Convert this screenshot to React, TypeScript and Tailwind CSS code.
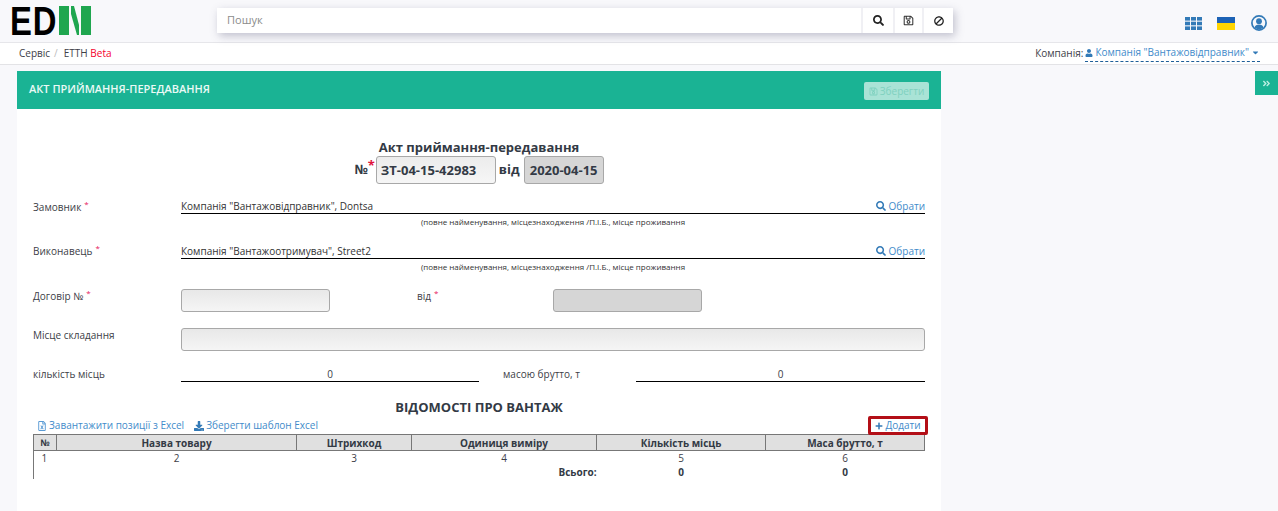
import { FaAngleDoubleRight, FaBan, FaCaretDown, FaDownload, FaPlus, FaRegFileExcel, FaRegSave, FaSearch, FaUser } from 'react-icons/fa';

const inputClass = 'h-[23px] border border-[#a8a8a8] rounded-[3px] bg-gradient-to-b from-[#e8e8e8] to-[#f5f5f5]';
const greyInputClass = 'h-[23px] border border-[#a8a8a8] rounded-[3px] bg-[#d6d6d6]';

function Star() {
  return <span className="text-[#e6175c] text-[8px] leading-none align-top ml-[3px]">*</span>;
}

function PartyRow({ label, value, top, labelTop }: { label: string; value: string; top: string; labelTop: string }) {
  return (
    <div className={top}>
      <div className="flex items-start">
        <div className={`w-[148px] leading-[14px] ${labelTop}`}>{label}<Star /></div>
        <div className="flex-1 border-b-[1.5px] border-black h-[18px] flex justify-between items-end leading-[14px] text-[#333]">
          <span>{value}</span>
          <a className="text-[#428bca] flex items-center gap-[3px]"><FaSearch className="text-[10px] text-[#337ab7]" />Обрати</a>
        </div>
      </div>
      <div className="ml-[148px] text-center text-[8px] leading-[10px] mt-[3px] text-[#333]">
        (повне найменування, місцезнаходження /П.І.Б., місце проживання
      </div>
    </div>
  );
}

export default function App() {
  return (
    <div className="h-[511px] overflow-hidden bg-[#f8f8fb] text-[10px] text-[#3d4047] font-['Open_Sans',sans-serif]">
      <header className="h-[43px] border-b border-[#e6e6ea] flex items-start relative">
        <div className="w-[217px] pl-[10px] pt-[1px] flex items-start">
          {/* logo */}
          <span className="font-['Liberation_Sans',sans-serif] font-bold text-[40px] leading-[40px] text-black origin-left scale-x-[0.82] tracking-[1px] -mr-[10px]">ED</span>
          <svg width="32" height="29" viewBox="0 0 32 29" className="ml-[1px] mt-[5px]">
            <rect x="0" y="0" width="10" height="29" fill="#1fa64f" />
            <rect x="22" y="0" width="10" height="29" fill="#1fa64f" />
            <polygon points="12,0 15,0 20,19 20,29 18,29 12,8" fill="#1fa64f" />
          </svg>
        </div>
        <div className="w-[736px] h-[25px] mt-[8px] bg-white shadow-[2px_3px_8px_rgba(90,90,120,0.35)] flex items-center">
          <span className="flex-1 pl-[10px] text-[11px] text-[#8b8b8b]">Пошук</span>
          <div className="w-[32px] h-full border-l-2 border-[#f0f0f4] flex items-center justify-center text-[#222]"><FaSearch className="text-[11px]" /></div>
          <div className="w-[29px] h-full border-l-2 border-[#f0f0f4] flex items-center justify-center text-[#333]"><FaRegSave className="text-[11px]" /></div>
          <div className="w-[31px] h-full border-l-2 border-[#f0f0f4] flex items-center justify-center text-[#222]"><FaBan className="text-[10px] -scale-x-100" /></div>
        </div>
        <div className="ml-auto pr-[11px] pt-[15px] flex items-center">
          <svg width="17" height="13" viewBox="0 0 17 13" fill="#337ab7">
            <rect x="0" y="0" width="5" height="3.6" />
            <rect x="6" y="0" width="5" height="3.6" />
            <rect x="12" y="0" width="5" height="3.6" />
            <rect x="0" y="4.7" width="5" height="3.6" />
            <rect x="6" y="4.7" width="5" height="3.6" />
            <rect x="12" y="4.7" width="5" height="3.6" />
            <rect x="0" y="9.4" width="5" height="3.6" />
            <rect x="6" y="9.4" width="5" height="3.6" />
            <rect x="12" y="9.4" width="5" height="3.6" />
          </svg>
          <div className="ml-[15px] w-[18px] h-[13px] flex flex-col">
            <div className="h-1/2 bg-[#1d62b5]" />
            <div className="h-1/2 bg-[#ffd500]" />
          </div>
          <svg width="16" height="16" viewBox="0 0 16 16" className="ml-[16px]">
            <circle cx="8" cy="8" r="7.1" fill="none" stroke="#337ab7" strokeWidth="1.7" />
            <circle cx="8" cy="6.2" r="2.9" fill="#337ab7" />
            <path d="M3.4 12.6c.6-2.2 2.4-3.2 4.6-3.2s4 1 4.6 3.2c-1.2 1.1-2.8 1.8-4.6 1.8s-3.4-.7-4.6-1.8z" fill="#337ab7" />
          </svg>
        </div>
      </header>

      <nav className="h-[22px] bg-white border-b border-[#e3e3e6] flex items-center pl-[19px] pr-[18px] pb-[1px]">
        <span>Сервіс</span>
        <span className="text-[#bbb] ml-[4px] mr-[6px]">/</span>
        <span>ЕТТН <span className="text-[#f5002b]">Beta</span></span>
        <span className="ml-auto">Компанія:</span>
        <span className="ml-[2px] text-[#428bca] border-b border-dashed border-[#1f5f99] flex items-center gap-[2px] h-[18px]">
          <FaUser className="text-[8px] text-[#337ab7]" />
          Компанія "Вантажовідправник"
          <FaCaretDown className="text-[9px] text-[#337ab7]" />
        </span>
      </nav>

      <div className="flex items-start pt-[6px]">
        <main className="ml-[17px] w-[924px] h-[446px] bg-white">
          <div className="h-[38px] bg-[#1ab394] flex items-center justify-between pl-[12px] pr-[12px] text-white">
            <span className="font-semibold text-[11px] text-[#eafaf6] pb-[1px]">АКТ ПРИЙМАННЯ-ПЕРЕДАВАННЯ</span>
            <button className="mt-[2px] h-[18px] w-[65px] rounded-[2px] bg-[#a9e3d6] text-[#7fd1bf] text-[10px] flex items-center justify-center gap-[2px]">
              <FaRegSave className="text-[9px]" />Зберегти
            </button>
          </div>

          <div className="px-[16px]">
            <h2 className="mt-[29px] text-center font-bold text-[13px] leading-[18px] text-[#333a45]">Акт приймання-передавання</h2>
            <div className="flex justify-center items-center font-bold text-[13px] text-[#333a45] h-[28px]">
              <span>№</span>
              <span className="text-[#e0143c] self-start text-[13px] leading-[16px] mt-[1px] mr-[1px] font-bold">*</span>
              <div className="w-[120px] h-[28px] border border-[#a8a8a8] rounded-[3px] bg-gradient-to-b from-[#ececec] to-[#f6f6f6] pl-[4px] leading-[26px]">ЗТ-04-15-42983</div>
              <span className="ml-[3px] mr-[4px]">від</span>
              <div className="w-[80px] h-[28px] border border-[#a8a8a8] rounded-[3px] bg-[#d6d6d6] text-center leading-[26px]">2020-04-15</div>
            </div>

            <PartyRow top="mt-[12px]" labelTop="pt-[4px]" label="Замовник" value={'Компанія "Вантажовідправник", Dontsa'} />
            <PartyRow top="mt-[14px]" labelTop="pt-[3px]" label="Виконавець" value={'Компанія "Вантажоотримувач", Street2'} />

            <div className="flex items-start mt-[17px]">
              <div className="w-[148px] leading-[14px]">Договір №<Star /></div>
              <div className={`w-[149px] ${inputClass}`} />
              <div className="w-[223px] pl-[87px] leading-[14px]">від<Star /></div>
              <div className={`w-[149px] ${greyInputClass}`} />
            </div>

            <div className="flex items-start mt-[16px]">
              <div className="w-[148px] leading-[14px]">Місце складання</div>
              <div className={`flex-1 ${inputClass}`} />
            </div>

            <div className="flex items-end mt-[15px] h-[16px]">
              <div className="w-[148px] leading-[14px] pb-[1px]">кількість місць</div>
              <div className="w-[298px] border-b-[1.5px] border-black text-center leading-[14px]">0</div>
              <div className="w-[157px] pl-[24px] leading-[14px] pb-[1px]">масою брутто, т</div>
              <div className="flex-1 border-b-[1.5px] border-black text-center leading-[14px]">0</div>
            </div>

            <h3 className="mt-[16px] text-center font-bold text-[13px] leading-[18px] text-[#333a45]">ВІДОМОСТІ ПРО ВАНТАЖ</h3>

            <div className="flex items-end justify-between h-[17px] text-[#428bca]">
              <div className="flex items-center pl-[4px] leading-[15px]">
                <FaRegFileExcel className="text-[10px] mr-[2px] text-[#5a9bd5]" />
                <span>Завантажити позиції з Excel</span>
                <FaDownload className="text-[10px] ml-[10px] mr-[2px] text-[#337ab7]" />
                <span>Зберегти шаблон Excel</span>
              </div>
              <div className="relative -mr-[3px] -mb-[2px] w-[60px] h-[19px] border-[3px] border-[#b30f17] rounded-[2px] flex items-center justify-center gap-[2px] bg-white z-10">
                <FaPlus className="text-[8px] text-[#337ab7]" />
                Додати
              </div>
            </div>

            <table className="mt-[1px] w-[891px] table-fixed border-collapse text-center">
              <colgroup>
                <col className="w-[23px]" />
                <col className="w-[240px]" />
                <col className="w-[115px]" />
                <col className="w-[185px]" />
                <col className="w-[169px]" />
                <col className="w-[159px]" />
              </colgroup>
              <thead>
                <tr className="h-[16px] bg-[#e0e0e0] font-bold text-[#333a45] leading-[14px]">
                  <th className="border border-[#777] text-[9px]">№</th>
                  <th className="border border-[#777]">Назва товару</th>
                  <th className="border border-[#777]">Штрихкод</th>
                  <th className="border border-[#777]">Одиниця виміру</th>
                  <th className="border border-[#777]">Кількість місць</th>
                  <th className="border border-[#777]">Маса брутто, т</th>
                </tr>
              </thead>
              <tbody>
                <tr className="h-[14px] leading-[14px]">
                  <td className="border-l border-[#777] pr-[2px]">1</td>
                  <td>2</td>
                  <td>3</td>
                  <td>4</td>
                  <td>5</td>
                  <td>6</td>
                </tr>
                <tr className="h-[14px] leading-[14px] font-bold text-[#333a45]">
                  <td className="border-l border-[#777]" />
                  <td />
                  <td />
                  <td className="text-right">Всього:</td>
                  <td>0</td>
                  <td>0</td>
                </tr>
              </tbody>
            </table>
          </div>
        </main>
        <div className="ml-auto w-[23px] h-[24px] bg-[#1ab394] flex items-center justify-center text-[#bdeee2]">
          <FaAngleDoubleRight className="text-[9px]" />
        </div>
      </div>
    </div>
  );
}
